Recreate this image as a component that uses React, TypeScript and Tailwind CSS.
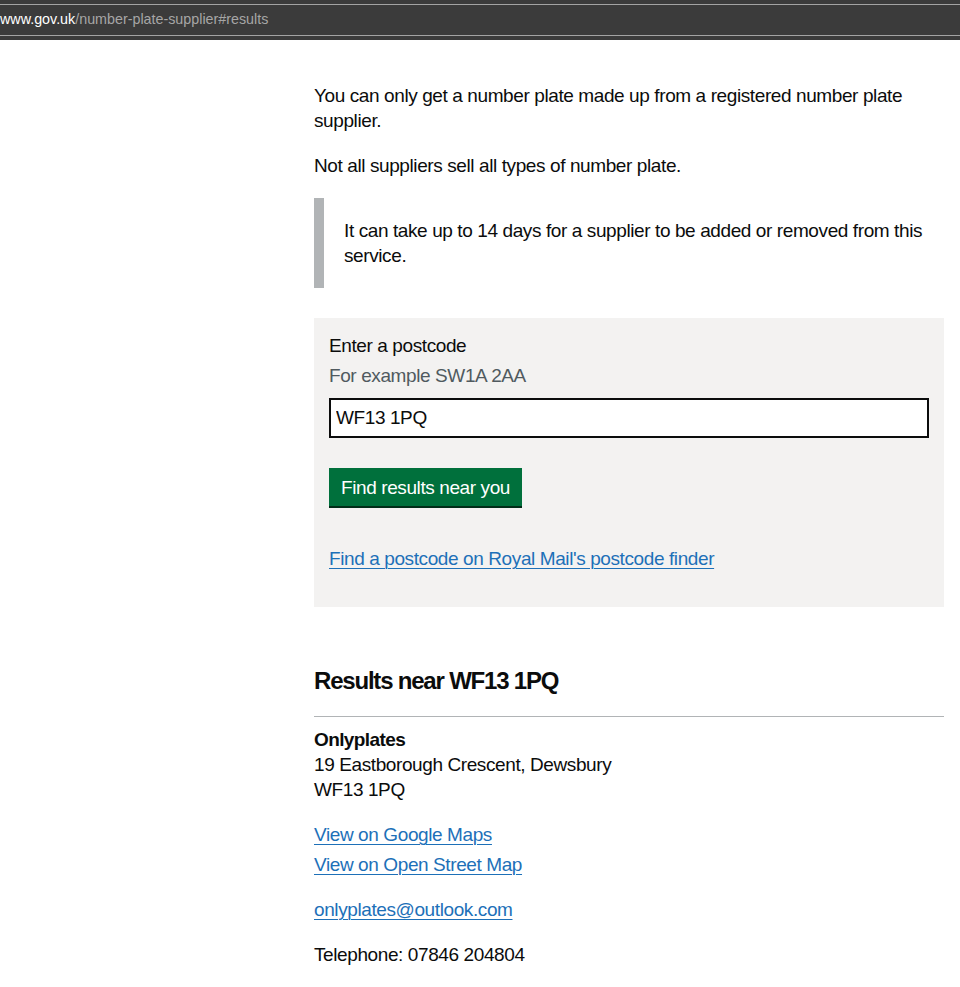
export default function App() {
  return (
    <div className="min-h-screen bg-white font-['Liberation_Sans',Arial,sans-serif] text-[#0b0c0c]">
      {/* browser address bar */}
      <div className="h-10 bg-[#3b3b3b] pt-1">
        <div className="h-px bg-[#a3a3a3]" />
        <div className="flex h-[30px] items-center text-[14.3px]">
          <span className="text-white">www.gov.uk</span>
          <span className="text-[#a6a6a6]">/number-plate-supplier#results</span>
        </div>
        <div className="h-px bg-[#a3a3a3]" />
      </div>

      <div className="flex">
        <div className="w-[314px] shrink-0" />

        <main className="w-[630px] pt-[43px] text-[19px] leading-[25px] tracking-[-0.4px]">
          <p className="mb-5">
            You can only get a number plate made up from a registered number plate supplier.
          </p>
          <p className="mb-5">Not all suppliers sell all types of number plate.</p>

          <div className="mb-[30px] border-l-[10px] border-[#b1b4b6] py-5 pl-5">
            It can take up to 14 days for a supplier to be added or removed from this service.
          </div>

          <form className="bg-[#f3f2f1] px-[15px] pt-[15px] pb-[36px]">
            <label className="block">Enter a postcode</label>
            <div className="mt-[5px] text-[#505a5f]">For example SW1A 2AA</div>
            <input
              defaultValue="WF13 1PQ"
              className="mt-[10px] block h-10 w-[600px] border-2 border-[#0b0c0c] bg-white px-[5px] text-[19px] outline-none"
            />
            <button
              type="button"
              className="mt-[30px] block h-[38px] bg-[#00703c] px-3 text-white shadow-[0_2px_0_#002d18]"
            >
              Find results near you
            </button>
            <a href="#" className="mt-[40px] inline-block text-[#1d70b8] underline decoration-1 underline-offset-[3px]">
              Find a postcode on Royal Mail's postcode finder
            </a>
          </form>

          <h2 className="mt-[59px] text-[24px] font-bold leading-[30px] tracking-[-1.2px]">
            Results near WF13 1PQ
          </h2>
          <hr className="mt-[20px] border-t border-[#b1b4b6]" />

          <div className="mt-[10px]">
            <div className="font-bold tracking-[-0.6px]">Onlyplates</div>
            <div>19 Eastborough Crescent, Dewsbury</div>
            <div>WF13 1PQ</div>

            <div className="mt-5 flex flex-col items-start">
              <a href="#" className="text-[#1d70b8] underline decoration-1 underline-offset-[3px]">
                View on Google Maps
              </a>
              <a href="#" className="mt-[5px] text-[#1d70b8] underline decoration-1 underline-offset-[3px]">
                View on Open Street Map
              </a>
            </div>

            <a href="#" className="mt-5 inline-block text-[#1d70b8] underline decoration-1 underline-offset-[3px]">
              onlyplates@outlook.com
            </a>

            <p className="mt-5">Telephone: 07846 204804</p>
          </div>
        </main>
      </div>
    </div>
  );
}
